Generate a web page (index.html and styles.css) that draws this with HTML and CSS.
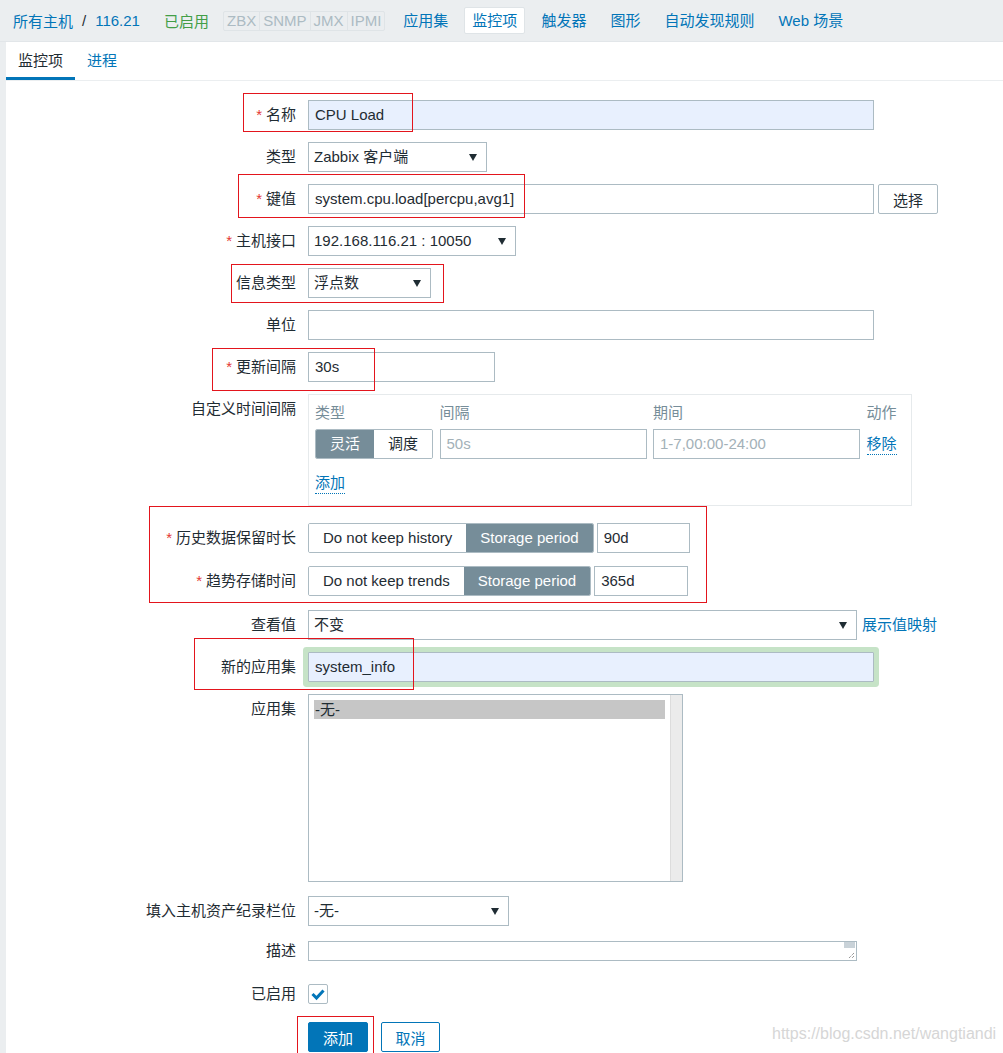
FILE: index.html
```html
<!DOCTYPE html>
<html lang="zh">
<head>
<meta charset="utf-8">
<title>监控项</title>
<link rel="stylesheet" href="styles.css">
</head>
<body>
<header class="topbar">
  <a class="link crumb">所有主机</a><span class="sep">/</span><a class="link crumb">116.21</a>
  <span class="status">已启用</span>
  <span class="tags"><span>ZBX</span><span>SNMP</span><span>JMX</span><span>IPMI</span></span>
  <nav class="nav">
    <a class="nav-item">应用集</a>
    <span class="nav-item active">监控项</span>
    <a class="nav-item">触发器</a>
    <a class="nav-item">图形</a>
    <a class="nav-item">自动发现规则</a>
    <a class="nav-item">Web 场景</a>
  </nav>
</header>

<main class="panel">
  <ul class="tabs">
    <li class="tab active">监控项</li>
    <li class="tab">进程</li>
  </ul>

  <form class="form">
    <div class="row">
      <label class="lbl req">名称</label>
      <div class="input filled w566">CPU Load</div>
    </div>
    <div class="row">
      <label class="lbl">类型</label>
      <div class="select w179">Zabbix 客户端</div>
    </div>
    <div class="row">
      <label class="lbl req">键值</label>
      <div class="input w566">system.cpu.load[percpu,avg1]</div>
      <button type="button" class="btn-alt">选择</button>
    </div>
    <div class="row">
      <label class="lbl req">主机接口</label>
      <div class="select w208">192.168.116.21 : 10050</div>
    </div>
    <div class="row">
      <label class="lbl">信息类型</label>
      <div class="select w123">浮点数</div>
    </div>
    <div class="row">
      <label class="lbl">单位</label>
      <div class="input w566"></div>
    </div>
    <div class="row">
      <label class="lbl req">更新间隔</label>
      <div class="input w187">30s</div>
    </div>
    <div class="row">
      <label class="lbl">自定义时间间隔</label>
      <div class="intervals">
        <div class="int-grid">
          <div class="th">类型</div><div class="th">间隔</div><div class="th">期间</div><div class="th">动作</div>
          <div class="seg"><span class="on">灵活</span><span>调度</span></div>
          <div class="input ph">50s</div>
          <div class="input ph">1-7,00:00-24:00</div>
          <a class="dlink mid">移除</a>
        </div>
        <a class="dlink add">添加</a>
      </div>
    </div>
    <div class="row mt17">
      <label class="lbl req">历史数据保留时长</label>
      <div class="seg"><span>Do not keep history</span><span class="on">Storage period</span></div>
      <div class="input w93 gap3">90d</div>
    </div>
    <div class="row mt13">
      <label class="lbl req">趋势存储时间</label>
      <div class="seg"><span>Do not keep trends</span><span class="on">Storage period</span></div>
      <div class="input w94 gap3">365d</div>
    </div>
    <div class="row mt14">
      <label class="lbl">查看值</label>
      <div class="select w549">不变</div>
      <a class="link maplink">展示值映射</a>
    </div>
    <div class="row">
      <label class="lbl">新的应用集</label>
      <div class="input filled halo w566">system_info</div>
    </div>
    <div class="row">
      <label class="lbl">应用集</label>
      <div class="listbox">
        <div class="lb-inner"><div class="opt">-无-</div></div>
        <div class="lb-track"></div>
      </div>
    </div>
    <div class="row mt14">
      <label class="lbl">填入主机资产纪录栏位</label>
      <div class="select w201">-无-</div>
    </div>
    <div class="row mt15">
      <label class="lbl short">描述</label>
      <div class="textarea"><span class="ta-thumb"></span><svg class="ta-grip" width="8" height="8" viewBox="0 0 8 8"><path d="M7 2 L2 7 M7 5 L5 7" stroke="#6b6b6b" stroke-width="1" stroke-dasharray="1 1"/></svg></div>
    </div>
    <div class="row mt23">
      <label class="lbl short">已启用</label>
      <span class="checkbox"><svg width="18" height="18" viewBox="0 0 18 18"><path d="M3.5 9 L7.5 13 L14.5 5.5" fill="none" stroke="#0275b8" stroke-width="3"/></svg></span>
    </div>
    <div class="row mt18">
      <span class="lbl"></span>
      <button type="button" class="btn-main">添加</button>
      <button type="button" class="btn-cancel">取消</button>
    </div>
  </form>
</main>

<div class="mark" style="left:243px;top:93px;width:170px;height:39px"></div>
<div class="mark" style="left:238px;top:174px;width:287px;height:44px"></div>
<div class="mark" style="left:231px;top:264px;width:213px;height:39px"></div>
<div class="mark" style="left:212px;top:348px;width:163px;height:43px"></div>
<div class="mark" style="left:149px;top:506px;width:558px;height:97px"></div>
<div class="mark" style="left:194px;top:638px;width:220px;height:52px"></div>
<div class="mark" style="left:297px;top:1016px;width:77px;height:45px"></div>

<div class="watermark">https://blog.csdn.net/wangtiandi</div>
</body>
</html>
```
FILE: styles.css
```css
html, body {
  margin: 0;
  padding: 0;
  overflow: hidden;
}
body {
  background: #ebeef0;
  font-family: "Liberation Sans", "Noto Sans CJK SC", sans-serif;
  font-size: 15px;
  color: #1f2c33;
  height: 1053px;
  position: relative;
}
a { text-decoration: none; }
.link { color: #0275b8; }

/* top bar */
.topbar {
  height: 41px;
  display: flex;
  align-items: center;
  padding-left: 13px;
  white-space: nowrap;
  border-bottom: 1px solid #e2e6e9;
}
.sep { margin: 0 9px; color: #1f2c33; }
.status { color: #429e47; margin-left: 24px; }
.tags {
  display: inline-flex;
  margin-left: 14px;
  border: 1px solid #dfe4e7;
  border-radius: 2px;
  height: 20px;
  box-sizing: border-box;
  background: #ebeef0;
}
.tags span {
  color: #acbbc3;
  padding: 0 3px;
  line-height: 18px;
  border-left: 1px solid #dfe4e7;
}
.tags span:first-child { border-left: 0; }
.nav { display: flex; margin-left: 10px; gap: 8px; }
.nav-item {
  color: #0275b8;
  padding: 0 7px;
  height: 25px;
  line-height: 25px;
  border: 1px solid transparent;
  border-radius: 2px;
}
.nav-item.active {
  background: #fff;
  border-color: #dfe4e7;
  color: #0275b8;
}

/* panel */
.panel {
  margin-left: 6px;
  background: #fff;
  height: 1011px;
}
.tabs {
  list-style: none;
  margin: 0;
  padding: 0;
  display: flex;
  border-bottom: 1px solid #ebeef0;
}
.tab {
  padding: 2px 12px 0 12px;
  height: 33px;
  line-height: 33px;
  border-bottom: 3px solid transparent;
  color: #0275b8;
}
.tab.active {
  color: #1f2c33;
  border-bottom-color: #0275b8;
}

/* form */
.form { padding-top: 19px; }
.row {
  display: flex;
  align-items: flex-start;
  margin-top: 12px;
}
.row:first-child { margin-top: 0; }
.mt13 { margin-top: 13px; }
.mt14 { margin-top: 14px; }
.mt15 { margin-top: 15px; }
.mt17 { margin-top: 17px; }
.mt18 { margin-top: 18px; }
.mt23 { margin-top: 23px; }

.lbl {
  width: 290px;
  padding-right: 12px;
  flex: none;
  text-align: right;
  line-height: 30px;
  white-space: nowrap;
}
.lbl.short { line-height: 20px; }
.lbl.req::before {
  content: "*";
  color: #e33734;
  margin-right: 4px;
}

.input, .select {
  height: 30px;
  box-sizing: border-box;
  border: 1px solid #acbbc3;
  background: #fff;
  padding: 0 6px;
  line-height: 28px;
  white-space: nowrap;
  overflow: hidden;
  flex: none;
}
.input.filled { background: #e8f0fe; }
.input.halo { box-shadow: 0 0 0 5px #c6e3c7; border-radius: 1px; }
.input.ph { color: #a3b1b8; }
.select { position: relative; padding-left: 5px; }
.select::after {
  content: "";
  position: absolute;
  right: 9px;
  top: 11px;
  border-left: 4px solid transparent;
  border-right: 4px solid transparent;
  border-top: 7px solid #1f2c33;
}
.w93 { width: 93px; }
.w94 { width: 94px; }
.w123 { width: 123px; }
.w179 { width: 179px; }
.w187 { width: 187px; }
.w201 { width: 201px; }
.w208 { width: 208px; }
.w549 { width: 549px; }
.w566 { width: 566px; }
.gap3 { margin-left: 3px; }

.btn-alt {
  margin-left: 4px;
  width: 60px;
  height: 30px;
  border: 1px solid #acbbc3;
  border-radius: 2px;
  background: #fff;
  color: #1f2c33;
  font: inherit;
  padding: 0;
}

/* segmented radio */
.seg {
  display: inline-flex;
  height: 30px;
  box-sizing: border-box;
  border: 1px solid #acbbc3;
  border-radius: 2px;
  overflow: hidden;
  flex: none;
  white-space: nowrap;
}
.seg span {
  padding: 0 14px;
  line-height: 28px;
  background: #fff;
  color: #1f2c33;
}
.seg span.on {
  background: #768d99;
  color: #fff;
}

/* custom intervals */
.intervals {
  width: 604px;
  height: 112px;
  box-sizing: border-box;
  border: 1px solid #e6eaec;
  padding: 8px 6px 0 6px;
}
.int-grid {
  display: grid;
  grid-template-columns: 118px 207px 207px auto;
  column-gap: 6.5px;
  row-gap: 6px;
}
.th {
  color: #768d99;
  line-height: 20px;
}
.dlink {
  color: #0275b8;
  border-bottom: 1px dotted #0275b8;
  line-height: 20px;
  justify-self: start;
}
.dlink.mid { align-self: center; }
.dlink.add {
  display: inline-block;
  margin-top: 14px;
}

.maplink { margin-left: 5px; line-height: 30px; }

/* listbox */
.listbox {
  width: 375px;
  height: 188px;
  box-sizing: border-box;
  border: 1px solid #acbbc3;
  display: flex;
  flex: none;
}
.lb-inner {
  flex: 1;
  padding: 5px 5px 0 5px;
}
.opt {
  background: #c6c6c6;
  height: 19px;
  line-height: 19px;
  padding-left: 1px;
}
.lb-track {
  width: 11px;
  background: #ebebeb;
  border-left: 1px solid #dcdcdc;
}

/* textarea */
.textarea {
  width: 549px;
  height: 20px;
  box-sizing: border-box;
  border: 1px solid #acbbc3;
  position: relative;
  flex: none;
}
.ta-thumb {
  position: absolute;
  right: 1px;
  top: 0;
  width: 11px;
  height: 6px;
  background: #c9d2d8;
}
.ta-grip {
  position: absolute;
  right: 1px;
  bottom: 1px;
}

/* checkbox */
.checkbox {
  width: 20px;
  height: 20px;
  box-sizing: border-box;
  border: 1px solid #acbbc3;
  border-radius: 2px;
  display: flex;
  align-items: center;
  justify-content: center;
}

/* buttons */
.btn-main, .btn-cancel {
  height: 30px;
  border-radius: 2px;
  font: inherit;
  padding: 0;
  border: 1px solid #0275b8;
}
.btn-main {
  width: 60px;
  background: #0275b8;
  color: #fff;
}
.btn-cancel {
  width: 59px;
  margin-left: 13px;
  background: #fff;
  color: #0275b8;
}

/* annotations */
.mark {
  position: absolute;
  box-sizing: border-box;
  border: 1px solid #e3151d;
  pointer-events: none;
}
.watermark {
  position: absolute;
  left: 772px;
  top: 1025px;
  font-size: 16px;
  color: #d6d6d6;
  white-space: nowrap;
}
```
